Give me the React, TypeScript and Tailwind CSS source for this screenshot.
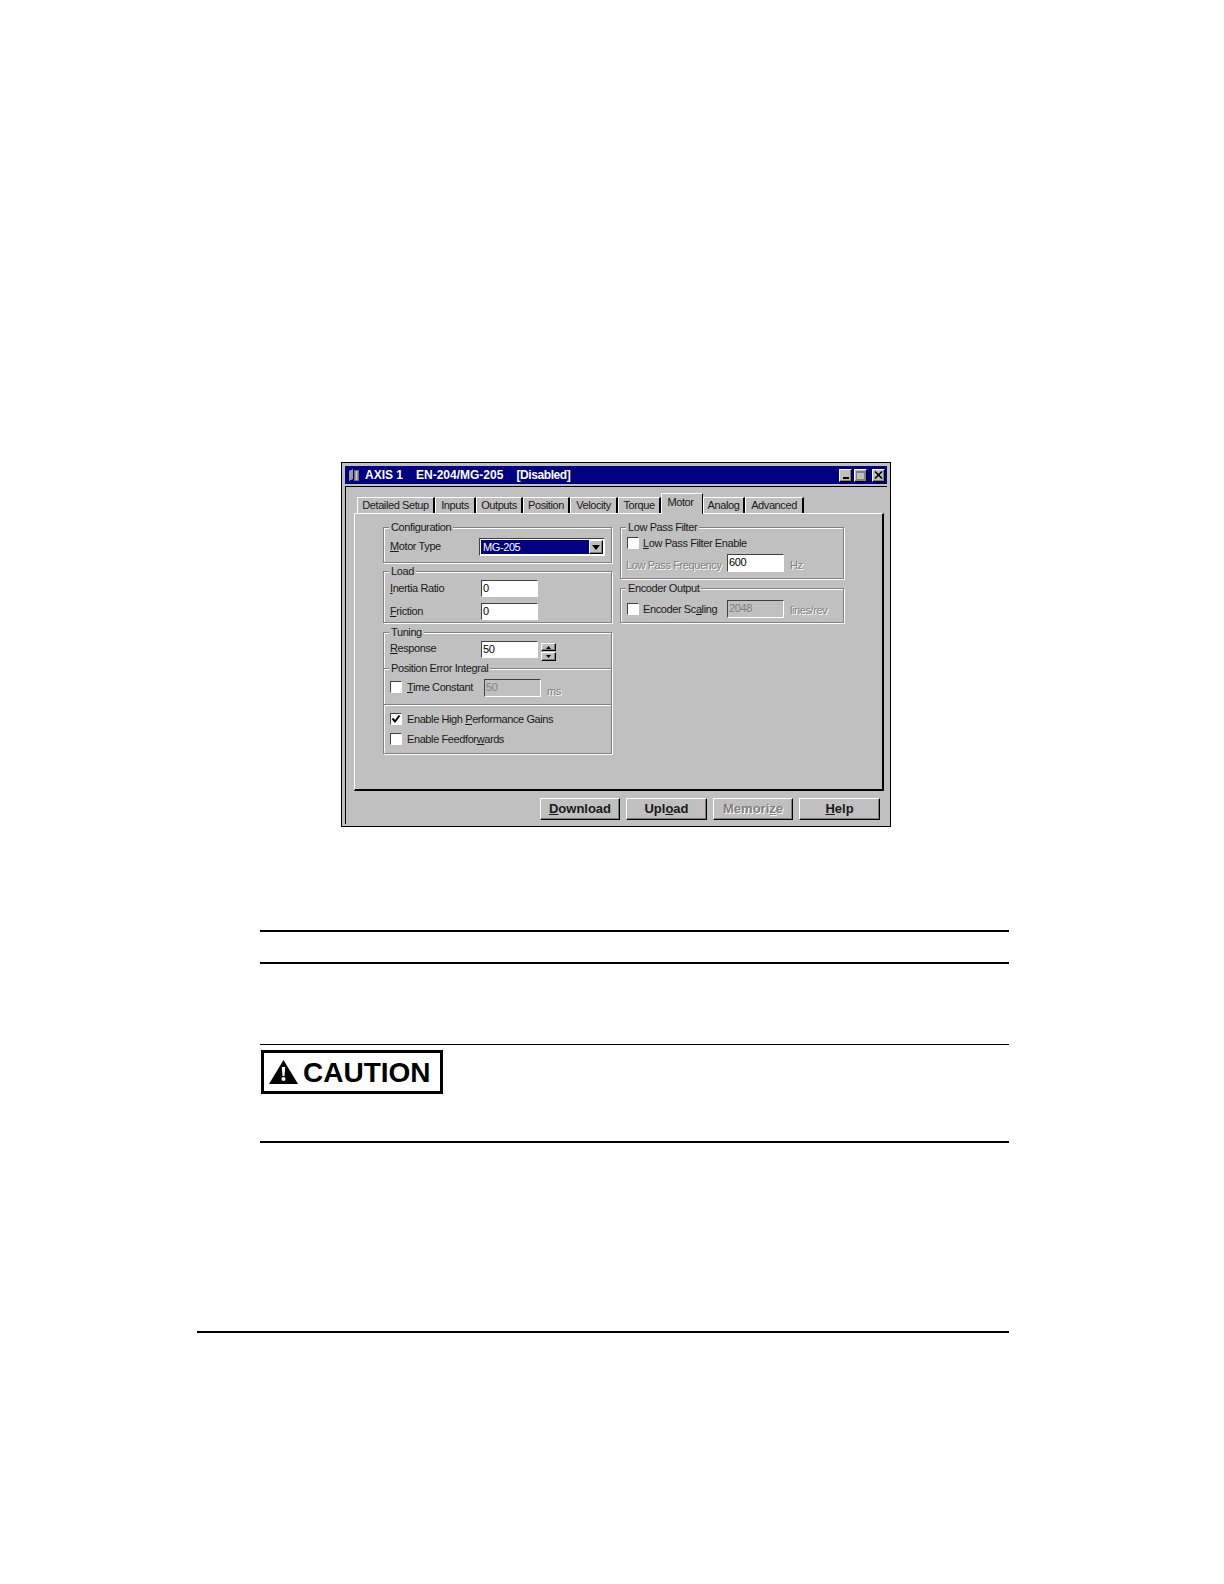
import type { ReactNode } from 'react';

const raised = 'border border-t-white border-l-white border-r-black border-b-black shadow-[inset_-1px_-1px_0_#808080]';
const sunken = 'border border-t-[#404040] border-l-[#404040] border-r-white border-b-white';
const disabled = 'text-[#808080] [text-shadow:1px_1px_0_#fff]';

const tabs = [
  { label: 'Detailed Setup', w: 'w-[78px]' },
  { label: 'Inputs', w: 'w-[41px]' },
  { label: 'Outputs', w: 'w-[47px]' },
  { label: 'Position', w: 'w-[47px]' },
  { label: 'Velocity', w: 'w-[48px]' },
  { label: 'Torque', w: 'w-[43px]' },
  { label: 'Motor', w: 'w-[42px]', active: true },
  { label: 'Analog', w: 'w-[42px]' },
  { label: 'Advanced', w: 'w-[59px]' },
];

function GroupBox({ title, className, children }: { title?: string; className: string; children: ReactNode }) {
  return (
    <div className={`relative border border-[#808080] shadow-[1px_1px_0_#fff,inset_1px_1px_0_#fff] ${className}`}>
      {title && <span className="absolute -top-[8px] left-[5px] bg-[#c0c0c0] px-[2px] leading-[14px]">{title}</span>}
      {children}
    </div>
  );
}

function Input({ value, off, className }: { value: string; off?: boolean; className: string }) {
  return (
    <div className={`${sunken} ${off ? 'bg-[#c0c0c0] text-[#808080]' : 'bg-white text-black'} shrink-0 pl-[1px] leading-[15px] ${className}`}>
      {value}
    </div>
  );
}

function Check({ checked }: { checked?: boolean }) {
  return (
    <span className={`${sunken} flex h-[12px] w-[12px] shrink-0 items-center justify-center bg-white`}>
      {checked && (
        <svg width="10" height="10" viewBox="0 0 10 10">
          <path d="M1.5 4.5 L4 7.5 L8.5 1.5" fill="none" stroke="#000" strokeWidth="2" />
        </svg>
      )}
    </span>
  );
}

function WinButton({ children }: { children: ReactNode }) {
  return <div className={`${raised} flex h-[13px] w-[13px] items-center justify-center bg-[#c0c0c0]`}>{children}</div>;
}

function Button({ children, off, className }: { children: ReactNode; off?: boolean; className: string }) {
  return (
    <div className={`${raised} flex h-[22px] items-center justify-center text-[13px] font-bold tracking-normal ${off ? disabled : ''} ${className}`}>
      {children}
    </div>
  );
}

export default function App() {
  return (
    <div className="h-[1584px] w-[1224px] overflow-hidden whitespace-nowrap bg-white pt-[462px] font-['Liberation_Sans',Arial,sans-serif] text-[11px] leading-[14px] tracking-[-0.4px] text-[#1a1a1a]">
      <div className="ml-[341px] h-[365px] w-[550px] border border-black bg-[#c0c0c0] p-[3px] shadow-[0_0_0_1px_#fff]">
        {/* title bar */}
        <div className="flex h-[18px] items-center bg-[#000080] pl-[4px] pr-[2px] text-white">
          <svg width="11" height="12" viewBox="0 0 11 12" className="mr-[5px] shrink-0">
            <path d="M0 2 L4 0 L4 10 L0 12 Z" fill="#9a9a9a" />
            <path d="M5 1 H10 V12 H5 Z" fill="#6f6f6f" />
            <path d="M6.5 2 H8.5 V11 H6.5 Z" fill="#c8c8c8" />
          </svg>
          <div className="flex text-[12px] font-bold tracking-normal">
            <span>AXIS 1</span>
            <span className="ml-[13px]">EN-204/MG-205</span>
            <span className="ml-[13px] tracking-[-0.4px]">[Disabled]</span>
          </div>
          <div className="ml-auto flex">
            <WinButton>
              <span className="mt-[6px] h-[2px] w-[6px] bg-black" />
            </WinButton>
            <div className="ml-[2px] mr-[5px]">
              <WinButton>
                <span className="h-[9px] w-[9px] border border-[#808080] border-t-2" />
              </WinButton>
            </div>
            <WinButton>
              <svg width="9" height="8" viewBox="0 0 9 8">
                <path d="M1 0.5 L8 7.5 M8 0.5 L1 7.5" stroke="#000" strokeWidth="1.6" />
              </svg>
            </WinButton>
          </div>
        </div>

        {/* client area */}
        <div className="mt-[2px] h-[338px] border-l border-t border-l-black border-t-black pl-[8px] pr-[3px]">
          <div className="flex h-[26px] items-end pl-[3px]">
            {tabs.map((t) =>
              t.active ? (
                <div key={t.label} className={`${t.w} relative z-10 -mb-[1px] flex h-[21px] items-start justify-center border-l border-t border-r border-l-white border-t-white border-r-black bg-[#c0c0c0] pr-[3px] pt-[1px]`}>
                  {t.label}
                </div>
              ) : (
                <div key={t.label} className={`${t.w} flex h-[16px] items-start justify-center border-l border-t border-r-2 border-l-white border-t-white border-r-black`}>
                  {t.label}
                </div>
              ),
            )}
          </div>

          {/* tab page */}
          <div className="flex h-[278px] gap-[8px] border-2 border-l border-t border-b-black border-l-white border-r-black border-t-white pl-[28px] pt-[13px]">
            <div className="w-[229px]">
              <GroupBox title="Configuration" className="h-[36px]">
                <div className="flex items-center pl-[6px] pt-[10px]">
                  <span className="w-[89px] pb-[2px]"><u>M</u>otor Type</span>
                  <div className={`${sunken} flex h-[18px] w-[126px] items-center justify-between bg-white p-[1px]`}>
                    <span className="h-[14px] w-[109px] bg-[#000080] pl-[2px] leading-[14px] text-white outline-1 outline-dotted outline-white">MG-205</span>
                    <span className={`${raised} flex h-[14px] w-[14px] items-center justify-center bg-[#c0c0c0]`}>
                      <svg width="8" height="5" viewBox="0 0 8 5"><path d="M0 0 H8 L4 5 Z" fill="#000" /></svg>
                    </span>
                  </div>
                </div>
              </GroupBox>

              <GroupBox title="Load" className="mt-[8px] h-[52px]">
                <div className="flex items-center pl-[6px] pt-[8px]">
                  <span className="w-[91px] pb-[2px]"><u>I</u>nertia Ratio</span>
                  <Input value="0" className="h-[17px] w-[57px]" />
                </div>
                <div className="mt-[6px] flex items-center pl-[6px]">
                  <span className="w-[91px] pb-[2px]"><u>F</u>riction</span>
                  <Input value="0" className="h-[17px] w-[57px]" />
                </div>
              </GroupBox>

              <GroupBox title="Tuning" className="mt-[9px] h-[122px]">
                <div className="flex h-[36px] items-start pl-[6px] pt-[8px]">
                  <span className="w-[91px]"><u>R</u>esponse</span>
                  <Input value="50" className="h-[17px] w-[57px]" />
                  <div className="ml-[3px] mt-[2px] flex w-[15px] flex-col gap-[1px]">
                    <span className={`${raised} flex h-[8px] items-center justify-center bg-[#c0c0c0]`}>
                      <svg width="5" height="3" viewBox="0 0 5 3"><path d="M2.5 0 L5 3 H0 Z" fill="#000" /></svg>
                    </span>
                    <span className={`${raised} flex h-[9px] items-center justify-center bg-[#c0c0c0]`}>
                      <svg width="5" height="3" viewBox="0 0 5 3"><path d="M0 0 H5 L2.5 3 Z" fill="#000" /></svg>
                    </span>
                  </div>
                </div>
                <div className="relative flex h-[36px] items-start border-t border-t-white pl-[6px] pt-[11px] shadow-[0_-1px_0_#808080]">
                  <span className="absolute -top-[9px] left-[5px] bg-[#c0c0c0] px-[2px] leading-[14px]">Position Error Integral</span>
                  <Check />
                  <span className="ml-[5px] w-[77px] leading-[13px]"><u>T</u>ime Constant</span>
                  <Input value="50" off className="-mt-[2px] h-[18px] w-[57px]" />
                  <span className={`${disabled} ml-[6px] mt-[4px] leading-[13px]`}>ms</span>
                </div>
                <div className="flex flex-col gap-[6px] border-t border-t-white pl-[6px] pt-[6px] shadow-[0_-1px_0_#808080]">
                  <div className="flex items-center">
                    <Check checked />
                    <span className="ml-[5px]">Enable High <u>P</u>erformance Gains</span>
                  </div>
                  <div className="flex items-center">
                    <Check />
                    <span className="ml-[5px]">Enable Feedfor<u>w</u>ards</span>
                  </div>
                </div>
              </GroupBox>
            </div>

            <div className="w-[224px]">
              <GroupBox title="Low Pass Filter" className="h-[52px]">
                <div className="flex items-center pl-[6px] pt-[8px]">
                  <Check />
                  <span className="ml-[4px]"><u>L</u>ow Pass Filter Enable</span>
                </div>
                <div className="mt-[4px] flex items-start pl-[6px]">
                  <span className={`${disabled} -ml-[1px] w-[101px] pt-[4px]`}>Low Pass Frequency</span>
                  <Input value="600" className="h-[18px] w-[57px]" />
                  <span className={`${disabled} ml-[6px] pt-[4px]`}>Hz</span>
                </div>
              </GroupBox>
              <GroupBox title="Encoder Output" className="mt-[9px] h-[35px]">
                <div className="flex items-center pl-[6px] pt-[11px]">
                  <Check />
                  <span className="ml-[4px] w-[84px]">Encoder Sc<u>a</u>ling</span>
                  <Input value="2048" off className="h-[18px] w-[57px]" />
                  <span className={`${disabled} ml-[6px] pt-[2px]`}>lines/rev</span>
                </div>
              </GroupBox>
            </div>
          </div>

          {/* buttons */}
          <div className="mt-[7px] flex justify-end gap-[6px] pr-[4px]">
            <Button className="w-[80px]"><span><u>D</u>ownload</span></Button>
            <Button className="w-[81px]"><span>Upl<u>o</u>ad</span></Button>
            <Button off className="w-[80px]"><span>Memori<u>z</u>e</span></Button>
            <Button className="w-[81px]"><span><u>H</u>elp</span></Button>
          </div>
        </div>
      </div>

      {/* document rules */}
      <div className="ml-[260px] mt-[103px] w-[749px]">
        <div className="h-[34px] border-y-2 border-black" />
        <div className="mt-[80px] h-[99px] border-y-2 border-t border-black pl-[1px] pt-[5px]">
          <div className="flex h-[44px] w-[182px] items-center border-[3px] border-black bg-white pl-[5px] font-bold tracking-normal text-black">
            <svg width="29" height="24" viewBox="0 0 29 24" className="shrink-0">
              <path d="M14.5 0 L29 24 H0 Z" fill="#000" />
              <path d="M12.8 7 H16.2 L15.5 16 H13.5 Z" fill="#fff" />
              <circle cx="14.5" cy="19" r="2" fill="#fff" />
            </svg>
            <span className="ml-[5px] mt-[2px] text-[28px] leading-none">CAUTION</span>
          </div>
        </div>
      </div>
      <div className="ml-[197px] mt-[188px] h-[2px] w-[812px] bg-black" />
    </div>
  );
}
